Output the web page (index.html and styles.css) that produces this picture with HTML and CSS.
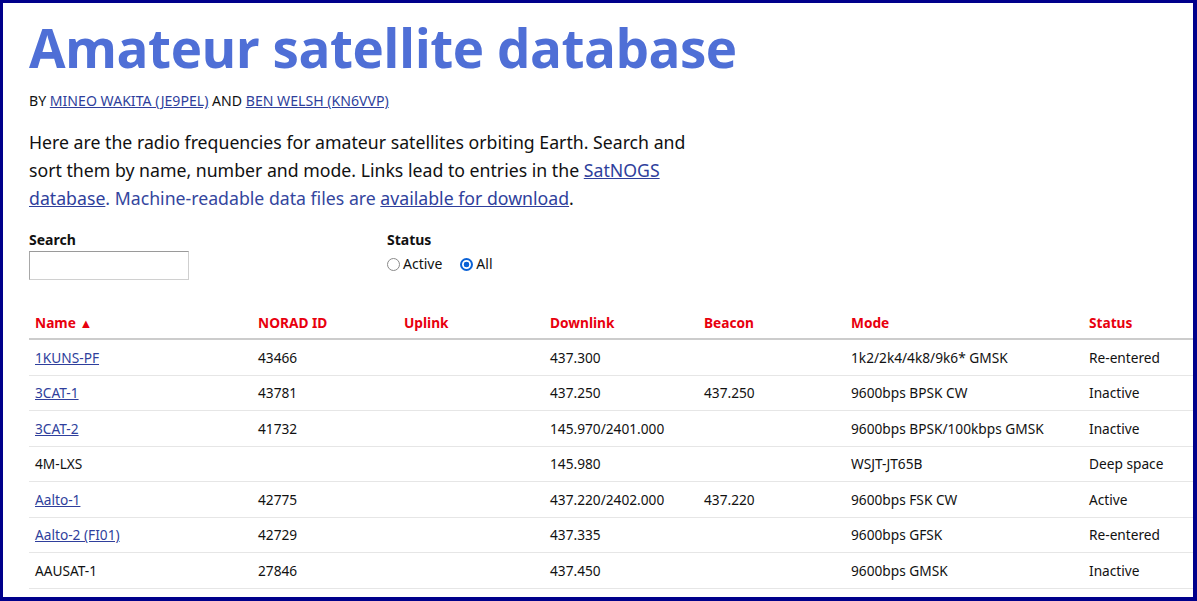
FILE: index.html
```html
<!DOCTYPE html>
<html lang="en">
<head>
<meta charset="utf-8">
<title>Amateur satellite database</title>
<link rel="stylesheet" href="styles.css">
</head>
<body>
<div class="frame">
  <h1 class="title">Amateur satellite database</h1>
  <p class="byline">BY <a href="#">MINEO WAKITA (JE9PEL)</a> AND <a href="#">BEN WELSH (KN6VVP)</a></p>
  <p class="intro">Here are the radio frequencies for amateur satellites orbiting Earth. Search and sort them by name, number and mode. Links lead to entries in the <a href="#">SatNOGS</a> <a href="#">database</a><span class="blue">. Machine-readable data files are </span><a href="#">available for download</a>.</p>
  <div class="filters">
    <div class="group group-search">
      <label class="label" for="q">Search</label>
      <input class="search" id="q" type="text">
    </div>
    <div class="group">
      <div class="label">Status</div>
      <div class="radios">
        <label class="radio"><input type="radio" name="status">Active</label>
        <label class="radio"><input type="radio" name="status" checked>All</label>
      </div>
    </div>
  </div>
  <table class="sats">
    <colgroup>
      <col class="c1"><col class="c2"><col class="c3"><col class="c4"><col class="c5"><col class="c6"><col class="c7">
    </colgroup>
    <thead>
      <tr><th>Name <span class="arrow">▲</span></th><th>NORAD ID</th><th>Uplink</th><th>Downlink</th><th>Beacon</th><th>Mode</th><th>Status</th></tr>
    </thead>
    <tbody>
      <tr><td><a href="#">1KUNS-PF</a></td><td>43466</td><td></td><td>437.300</td><td></td><td>1k2/2k4/4k8/9k6* GMSK</td><td>Re-entered</td></tr>
      <tr><td><a href="#">3CAT-1</a></td><td>43781</td><td></td><td>437.250</td><td>437.250</td><td>9600bps BPSK CW</td><td>Inactive</td></tr>
      <tr><td><a href="#">3CAT-2</a></td><td>41732</td><td></td><td>145.970/2401.000</td><td></td><td>9600bps BPSK/100kbps GMSK</td><td>Inactive</td></tr>
      <tr><td>4M-LXS</td><td></td><td></td><td>145.980</td><td></td><td>WSJT-JT65B</td><td>Deep space</td></tr>
      <tr><td><a href="#">Aalto-1</a></td><td>42775</td><td></td><td>437.220/2402.000</td><td>437.220</td><td>9600bps FSK CW</td><td>Active</td></tr>
      <tr><td><a href="#">Aalto-2 (FI01)</a></td><td>42729</td><td></td><td>437.335</td><td></td><td>9600bps GFSK</td><td>Re-entered</td></tr>
      <tr><td>AAUSAT-1</td><td>27846</td><td></td><td>437.450</td><td></td><td>9600bps GMSK</td><td>Inactive</td></tr>
    </tbody>
  </table>
</div>
</body>
</html>
```

FILE: styles.css
```css
html, body {
  margin: 0;
  padding: 0;
  background: #ffffff;
}
.frame {
  box-sizing: border-box;
  width: 1197px;
  height: 601px;
  border: 3px solid #00008b;
  border-right-width: 4px;
  border-bottom-width: 4px;
  overflow: hidden;
  padding: 0 0 0 26px;
  font-family: "Noto Sans", "Open Sans", sans-serif;
  color: #111111;
}
.title {
  margin: 17px 0 0;
  font-family: "Open Sans", "Noto Sans", sans-serif;
  font-weight: 700;
  font-size: 53px;
  line-height: 56px;
  color: #4f6fd6;
  letter-spacing: -0.5px;
}
.byline {
  margin: 15px 0 0;
  font-size: 14.1px;
  line-height: 20px;
  color: #111111;
}
a {
  color: #2f3f9c;
  text-decoration: underline;
}
.intro {
  margin: 17px 0 0;
  max-width: 665px;
  font-size: 17.7px;
  line-height: 28px;
}
.blue {
  color: #34469e;
}
.filters {
  display: flex;
  margin-top: 18px;
}
.group {
  display: flex;
  flex-direction: column;
}
.group-search {
  width: 358px;
}
.label {
  font-size: 14px;
  font-weight: 700;
  line-height: 20px;
}
.search {
  box-sizing: border-box;
  width: 160px;
  height: 29px;
  margin: 1px 0 0;
  border: 1px solid #9a9a9a;
  border-bottom-color: #d0d0d0;
  border-right-color: #cfcfcf;
  border-left-color: #a8a8a8;
}
.radios {
  display: flex;
  gap: 18px;
  margin-top: 4px;
  font-size: 14px;
  line-height: 20px;
}
.radio {
  display: flex;
  align-items: center;
  gap: 3px;
}
.radio input {
  appearance: none;
  -webkit-appearance: none;
  box-sizing: border-box;
  margin: 0;
  width: 13px;
  height: 13px;
  border: 1.5px solid #8a8a8a;
  border-radius: 50%;
  background: #ffffff;
}
.radio input:checked {
  border: 2px solid #0b62d6;
  background: radial-gradient(circle, #0b62d6 0 2.6px, #ffffff 3.1px);
}
.sats {
  margin-top: 26px;
  border-collapse: collapse;
  table-layout: fixed;
  width: 1254px;
  font-size: 13.7px;
}
.c1 { width: 223px; }
.c2 { width: 146px; }
.c3 { width: 146px; }
.c4 { width: 154px; }
.c5 { width: 147px; }
.c6 { width: 238px; }
.c7 { width: 200px; }
.sats th {
  height: 32px;
  padding: 0 6px;
  text-align: left;
  color: #e8000e;
  font-weight: 700;
  border-bottom: 2px solid #cccccc;
}
.arrow {
  font-size: 13px;
}
.sats td {
  height: 34.5px;
  padding: 0 6px;
  border-bottom: 1px solid #e6e6e6;
  color: #111111;
  white-space: nowrap;
}
.sats td a {
  color: #2f3f9c;
}
```
